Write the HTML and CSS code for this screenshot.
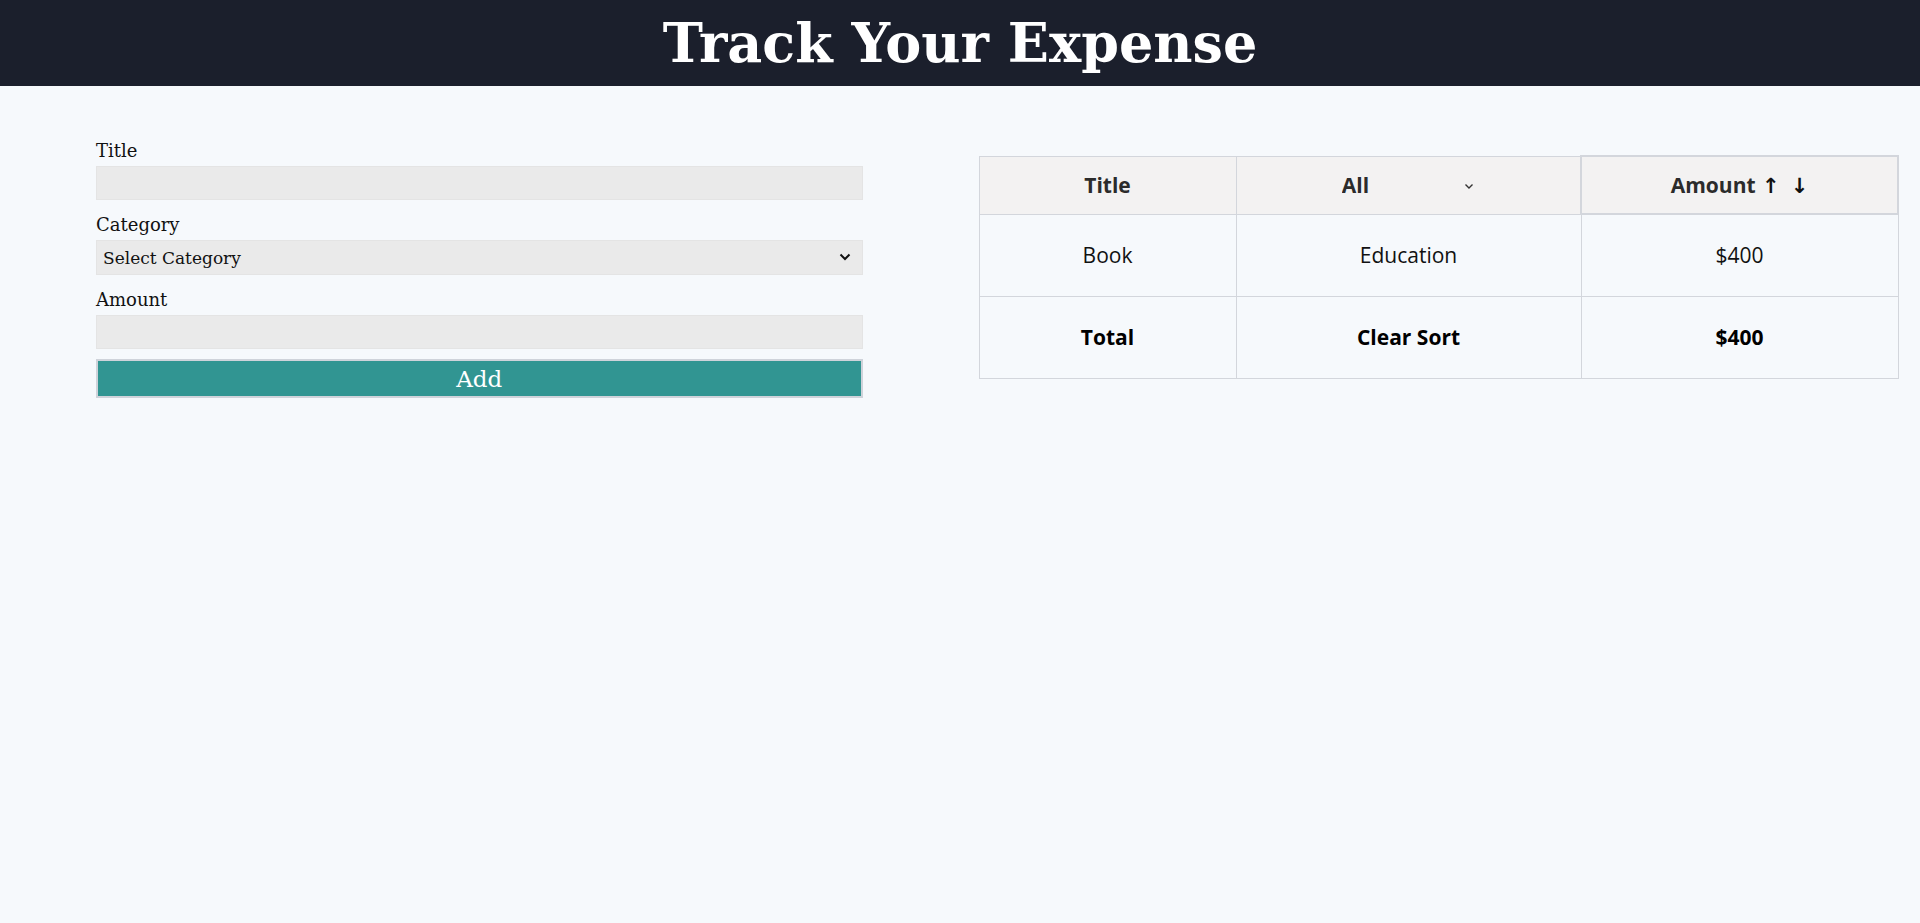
FILE: index.html
```html
<!DOCTYPE html>
<html lang="en">
<head>
<meta charset="utf-8">
<title>Track Your Expense</title>
<link rel="stylesheet" href="styles.css">
</head>
<body>
<header class="topbar">
  <h1 class="brand">Track Your Expense</h1>
</header>
<main class="layout">
  <form class="expense-form">
    <label class="field-label" for="title">Title</label>
    <input class="field-input" id="title" type="text">
    <label class="field-label" for="category">Category</label>
    <div class="select-wrap">
      <select class="field-select" id="category">
        <option>Select Category</option>
        <option>Grocery</option>
        <option>Clothes</option>
        <option>Bills</option>
        <option>Education</option>
        <option>Medicine</option>
      </select>
      <svg class="select-chevron" width="12" height="8" viewBox="0 0 12 8"><path d="M1.5 1.5 L6 6 L10.5 1.5" fill="none" stroke="#111" stroke-width="2"/></svg>
    </div>
    <label class="field-label" for="amount">Amount</label>
    <input class="field-input" id="amount" type="text">
    <button class="add-btn" type="button">Add</button>
  </form>
  <section class="table-area">
    <table class="expense-table">
      <colgroup>
        <col class="col-title">
        <col class="col-cat">
        <col class="col-amount">
      </colgroup>
      <thead>
        <tr>
          <th>Title</th>
          <th>
            <div class="filter-wrap">
              <select class="filter-select">
                <option>All</option>
                <option>Grocery</option>
                <option>Clothes</option>
                <option>Bills</option>
                <option>Education</option>
                <option>Medicine</option>
              </select>
              <svg class="filter-chevron" width="10" height="7" viewBox="0 0 10 7"><path d="M1.5 1.5 L5 5 L8.5 1.5" fill="none" stroke="#333" stroke-width="1.4"/></svg>
            </div>
          </th>
          <th class="amount-head">Amount <span class="sort-arrow">↑</span><span class="sort-arrow gap">↓</span></th>
        </tr>
      </thead>
      <tbody>
        <tr>
          <td>Book</td>
          <td>Education</td>
          <td>$400</td>
        </tr>
      </tbody>
      <tfoot>
        <tr>
          <th>Total</th>
          <th>Clear Sort</th>
          <th>$400</th>
        </tr>
      </tfoot>
    </table>
  </section>
</main>
</body>
</html>
```
FILE: styles.css
```css
* { box-sizing: border-box; }

html, body {
  margin: 0;
  padding: 0;
  background: #f6f9fc;
  min-height: 100%;
}

body {
  font-family: "DejaVu Serif", Georgia, serif;
  color: #111;
}

.topbar {
  background: #1b1f2c;
  height: 86px;
}

.brand {
  margin: 0;
  text-align: center;
  color: #fff;
  font-family: "DejaVu Serif", Georgia, serif;
  font-weight: bold;
  font-size: 54px;
  line-height: 86px;
}

.layout {
  display: flex;
  align-items: flex-start;
  padding: 0 21px 0 96px;
}

.expense-form {
  width: 768px;
  display: flex;
  flex-direction: column;
  padding-top: 53px;
}

.field-label {
  display: block;
  font-size: 18px;
  line-height: 24px;
  margin-bottom: 3px;
  color: #111;
}

.field-input,
.field-select {
  width: 100%;
  height: 34px;
  border: 1px solid #e4e4e4;
  background: #eaeaea;
  margin: 0 0 13px 0;
  font-family: "DejaVu Serif", Georgia, serif;
  font-size: 17px;
  color: #111;
  outline: none;
}

.select-wrap {
  position: relative;
}

.field-select {
  appearance: none;
  -webkit-appearance: none;
  height: 35px;
  padding: 0 30px 0 6px;
}

.select-chevron {
  position: absolute;
  right: 12px;
  top: 13px;
  pointer-events: none;
}

.add-btn {
  margin-top: -3px;
  height: 39px;
  width: 100%;
  background: #319592;
  border: 2px solid #cfd3da;
  color: #fff;
  font-family: "DejaVu Serif", Georgia, serif;
  font-size: 23px;
  padding: 0;
}

.table-area {
  margin-left: 116px;
  padding-top: 69px;
  flex: 1;
}

.expense-table {
  width: 919px;
  border-collapse: collapse;
  font-family: "Open Sans", "Noto Sans", sans-serif;
  font-size: 21px;
  table-layout: fixed;
}

.col-title { width: 257px; }
.col-cat { width: 345px; }
.col-amount { width: 317px; }

.expense-table th,
.expense-table td {
  border: 1px solid #d3d6dc;
  text-align: center;
  padding: 0;
}

.expense-table thead th {
  background: #f3f2f2;
  height: 58px;
  font-weight: bold;
  color: #2b2b2b;
}

.expense-table thead th.amount-head {
  border: 2px solid #d3d6dc;
}

.expense-table tbody td {
  height: 82px;
  color: #111;
  font-weight: normal;
}

.expense-table tfoot th {
  height: 82px;
  font-weight: bold;
  color: #000;
}

.filter-wrap {
  position: relative;
  display: inline-block;
  margin-left: -5px;
}

.filter-select {
  appearance: none;
  -webkit-appearance: none;
  background: transparent;
  border: none;
  width: 136px;
  font-family: "Open Sans", "Noto Sans", sans-serif;
  font-weight: bold;
  font-size: 21px;
  color: #2b2b2b;
  padding: 0 4px;
  outline: none;
}

.filter-chevron {
  position: absolute;
  right: 0;
  top: 12px;
  pointer-events: none;
}

.sort-arrow {
  font-family: "DejaVu Sans", sans-serif;
  color: #111;
  font-weight: bold;
  margin-left: 1px;
}

.sort-arrow.gap {
  margin-left: 11px;
}
```
